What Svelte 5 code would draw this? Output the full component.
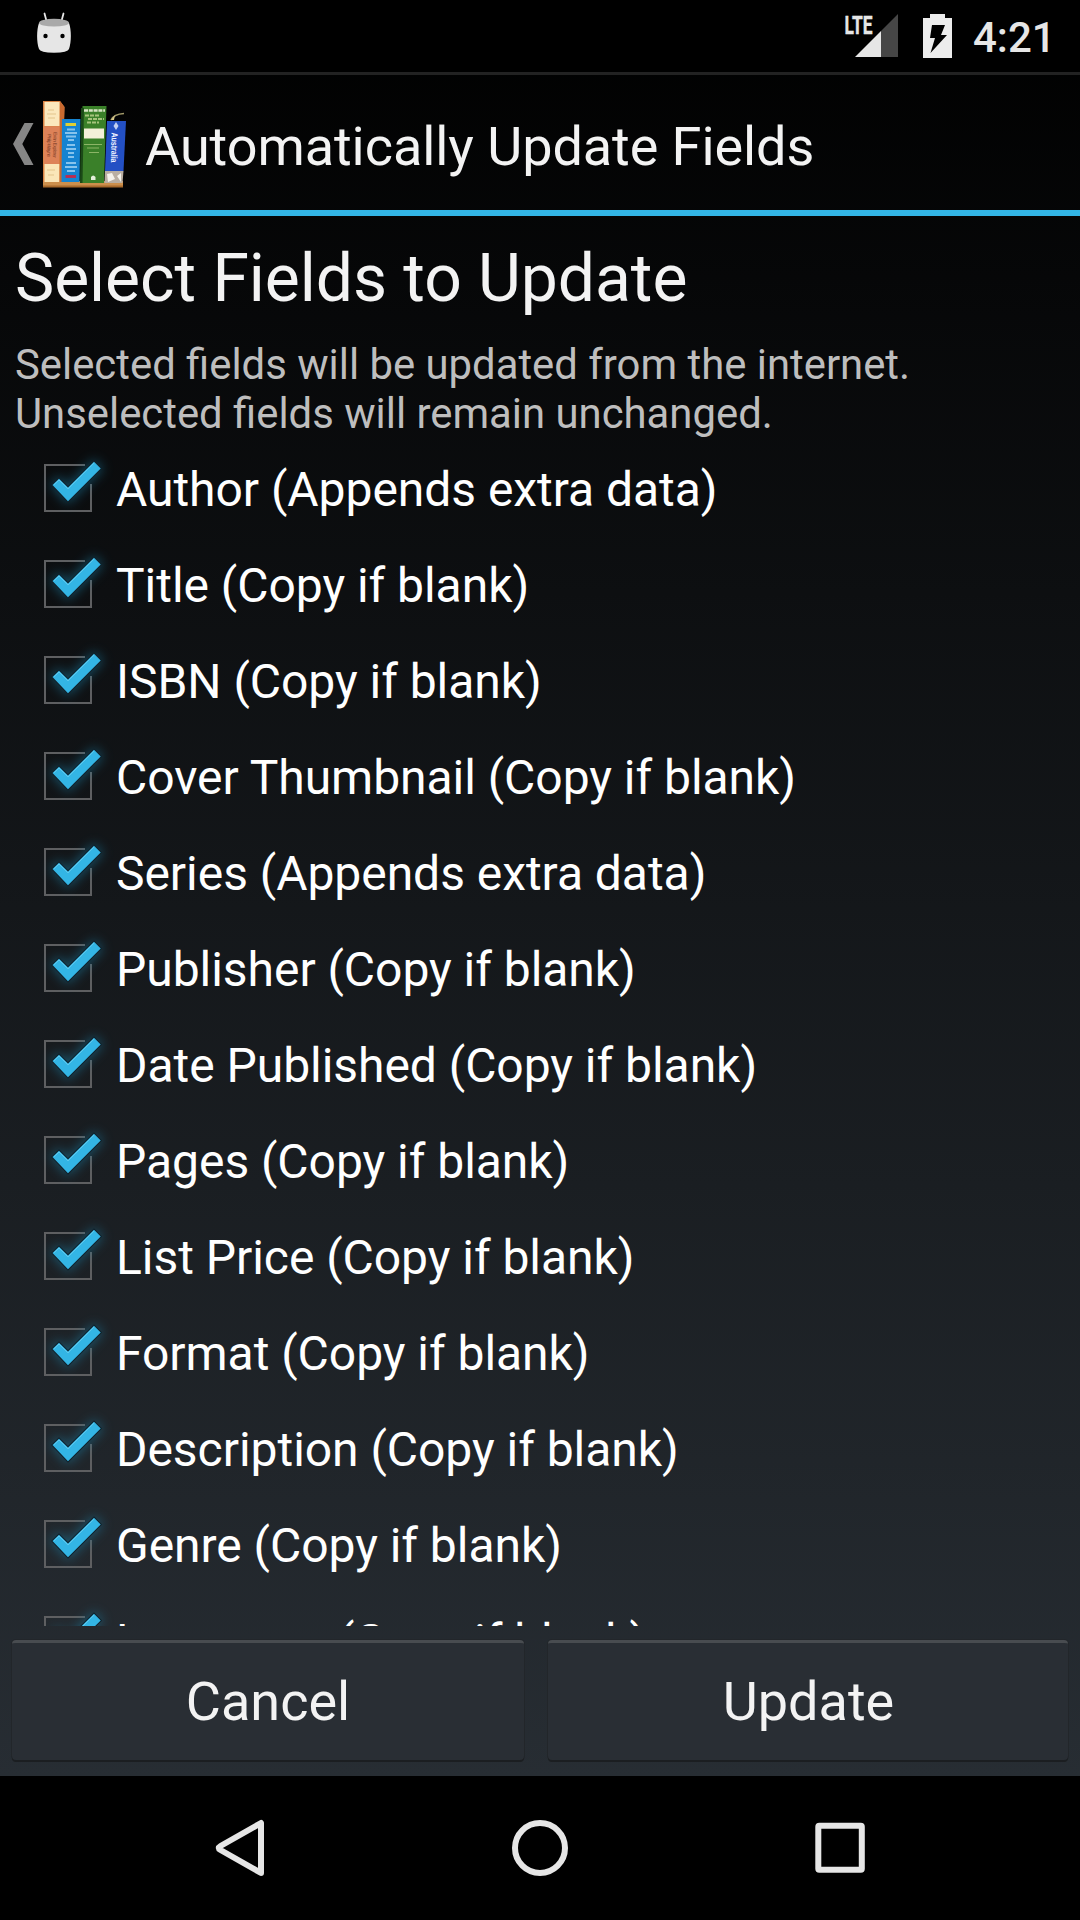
<script>
  const fields = [
    'Author (Appends extra data)',
    'Title (Copy if blank)',
    'ISBN (Copy if blank)',
    'Cover Thumbnail (Copy if blank)',
    'Series (Appends extra data)',
    'Publisher (Copy if blank)',
    'Date Published (Copy if blank)',
    'Pages (Copy if blank)',
    'List Price (Copy if blank)',
    'Format (Copy if blank)',
    'Description (Copy if blank)',
    'Genre (Copy if blank)',
    'Language (Copy if blank)'
  ];
</script>

<div class="screen">
  <header class="status">
    <svg class="droid" width="36" height="42" viewBox="36 12 36 42">
      <path d="M44.500 13.500L46.500 21M63.500 13.500L61.500 21" stroke="#e6e6e6" stroke-width="1.800" stroke-linecap="round" />
      <path d="M39 23C36.500 30 36.500 42 39 49Q40 52.700 54 52.700Q68 52.700 69 49C71.500 42 71.500 30 69 23Z" fill="#e6e6e6" />
      <ellipse cx="54" cy="22.700" rx="15" ry="3.900" fill="#a9a9a9" />
      <circle cx="45.500" cy="36" r="2.200" fill="#000" />
      <circle cx="62.500" cy="36" r="2.200" fill="#000" />
    </svg>
    <svg class="signal" width="56" height="50" viewBox="844 8 56 50">
      <path d="M855 57L881 31V57Z" fill="#e6e6e6" />
      <path d="M881 31L898 14V57H881Z" fill="#464646" />
      <text x="844.500" y="33.800" textLength="28" lengthAdjust="spacingAndGlyphs">LTE</text>
    </svg>
    <svg class="battery" width="30" height="46" viewBox="922 13 30 46">
      <path d="M930 14H945V18H952V58H923V18H930Z" fill="#ececec" />
      <path d="M932 25H945L941 35H947L930.500 53L935 38H930Z" fill="#000" />
    </svg>
    <span class="clock">4:21</span>
  </header>

  <div class="bar">
    <svg class="chevron" width="22" height="44" viewBox="12 122 22 44">
      <path d="M24.500 123H33.500L22.300 144L33.500 165H24.500L13 144Z" fill="#868686" />
    </svg>
    <svg class="logo" width="86" height="90" viewBox="42 99 86 90">
      <path d="M43 181H123V187H43Z" fill="#cc8f4c" />
      <path d="M43 185.500H123V187.500H43Z" fill="#a86a2c" />
      <path d="M43 101H60L64.500 107L62 182H43Z" fill="#d98345" />
      <path d="M44.500 102H59.500V126H44.500Z" fill="#fbe8bd" />
      <path d="M44 126.500H60L59 164H44Z" fill="#dd8258" />
      <path d="M44.500 164H59.500V182H44.500Z" fill="#fae6b8" />
      <path d="M60 101L64.500 107L62 182H59.500Z" fill="#c96a30" />
      <path d="M48 110H54M47 114H56M48 118H55M47 170H55M48 175H54" stroke="#e3c58c" stroke-width="1" />
      <path d="M62 119H80.500L79.500 182H61.500Z" fill="#1583d0" />
      <path d="M65.500 124.500H76" stroke="#e0cf32" stroke-width="3" />
      <path d="M67 129.500H75M65 133H77M66 136.500H76M68 140H74M67 145H75M66 149H76M68 153H74M68 157H74M66 163H76M65 167H77M67 171H75" stroke="#86c3ec" stroke-width="2" />
      <path d="M65.500 176.500H76" stroke="#c02a4d" stroke-width="2.800" />
      <path d="M82.500 106H106.500L104 183H81Z" fill="#3a8029" />
      <path d="M81 108H84L82.500 183H80Z" fill="#1b4a17" />
      <path d="M84 110.500H105" stroke="#d8e4c4" stroke-width="2.500" stroke-dasharray="4 .8" />
      <path d="M85 115.500H99M88 119H104M87 122.500H99" stroke="#a5c47c" stroke-width="1.800" stroke-dasharray="4 1" />
      <path d="M84 128.500H104V138.500H84Z" fill="#f4f0d9" />
      <path d="M84 144.500H102M87 148H99M89 152.500H99" stroke="#8cb566" stroke-width="1.200" />
      <path d="M91 180V177Q93 174 95.500 177V180Z" fill="#e4f0da" />
      <path d="M111 120Q114 114 124 113.500" stroke="#a39a6a" stroke-width="1.600" fill="none" />
      <path d="M111 120L115 115L114 120Z" fill="#d8c98a" />
      <path d="M107 121H126L123.500 171H105Z" fill="#2350c4" />
      <path d="M105 171H123.500L122.500 183H104.500Z" fill="#b9aea2" />
      <path d="M107 174L112 173L115 179L108 182ZM117 176L121 173V182Z" fill="#f4f1ea" />
      <path d="M116 122L118.500 126L116 130L113.500 126Z" fill="#c3d0f2" />
      <text class="spine" transform="translate(111.500 132.500) rotate(91)" textLength="30" lengthAdjust="spacingAndGlyphs">Australia</text>
      <text class="author" transform="translate(53.500 132) rotate(91)" textLength="26">Evan Explorer</text>
      <text class="author" transform="translate(47.500 134) rotate(91)" textLength="23">Philip Wayne</text>
    </svg>
    <span class="title">Automatically Update Fields</span>
  </div>

  <main>
    <h1>Select Fields to Update</h1>
    <p>Selected fields will be updated from the internet.<br />Unselected fields will remain unchanged.</p>
    <div class="list">
      {#each fields as field}
        <div class="row">
          <svg class="check" width="96" height="96" viewBox="0 0 96 96">
            <path d="M61 25H21V71H67V44" fill="none" stroke="#5e5f61" stroke-width="2" />
            <path class="glow" d="M28.700 44.700L34.700 38.700L43.700 48L70 22L76.700 28.700L44 61.300Z" />
            <path class="tick" d="M28.500 45L35 38.700L44 47.500L70 21.700L76.700 28.400L44 61.200Z" />
            <path class="shine" d="M30 44.800L35 40L44 48.900L70 23.100" />
          </svg>
          <span>{field}</span>
        </div>
      {/each}
    </div>
  </main>

  <div class="actions">
    <button class="cancel">Cancel</button>
    <button class="update">Update</button>
  </div>

  <nav>
    <svg width="1080" height="144" viewBox="0 1776 1080 144" fill="none" stroke="#e6e6e6" stroke-width="6" stroke-linejoin="round">
      <path d="M261 1823V1873L220.500 1850Q217 1848 220.500 1846Z" />
      <circle cx="540" cy="1848" r="25" />
      <rect x="818.300" y="1825.800" width="43.500" height="44" rx="1" />
    </svg>
  </nav>
</div>

<style>
  :global(body) { margin: 0; background: #000; }
  .screen {
    width: 1080px; height: 1920px; overflow: hidden; box-sizing: border-box;
    display: flex; flex-direction: column;
    font-family: Roboto, sans-serif; color: #f3f3f3;
    background: linear-gradient(#000 0, #272d33 1776px);
  }
  svg { display: block; flex: none; }
  .status { height: 72px; flex: none; background: #000; display: flex; align-items: flex-start; }
  .droid { margin: 12px 0 0 36px; }
  .signal { margin: 8px 0 0 772px; overflow: visible; }
  .signal text { font: 700 26.500px Roboto, sans-serif; fill: #e6e6e6; stroke: #e6e6e6; stroke-width: .4px; }
  .battery { margin: 13px 0 0 22px; }
  .clock { margin: 13px 0 0 21px; font-size: 42px; line-height: 50px; font-weight: 500; color: #e6e6e6; }
  .bar {
    height: 144px; flex: none; box-sizing: border-box; display: flex; align-items: flex-start;
    border-top: 3px solid #222; border-bottom: 6px solid #33b5e5;
  }
  .chevron { margin: 47px 0 0 12px; }
  .logo { margin: 24px 0 0 8px; }
  .title { margin: 40px 0 0 17px; font-size: 54px; line-height: 64px; letter-spacing: -.06px; white-space: nowrap; }
  .spine { font: 700 9px "Liberation Sans", sans-serif; fill: #eef2ff; }
  .author { font: 5px "Liberation Sans", sans-serif; fill: #7b3c26; }
  main { height: 1410px; flex: none; overflow: hidden; }
  h1 { margin: 24px 0 0 15px; font-size: 66px; line-height: 78px; letter-spacing: -.05px; font-weight: 400; }
  p { margin: 22px 0 0 15px; font-size: 41.840px; line-height: 49px; color: #bebebe; }
  .list { margin-top: 2px; }
  .row { height: 96px; display: flex; align-items: center; padding-left: 24px; font-size: 48px; letter-spacing: -.04px; color: #fff; white-space: nowrap; }
  .row span { margin-left: -4px; padding-top: 3px; }
  .glow { fill: #1b7fa5; stroke: #1b7fa5; stroke-width: 4; filter: blur(6px); opacity: .55; }
  .tick { fill: #33b5e5; stroke: #10212b; stroke-width: 2; paint-order: stroke; }
  .shine { fill: none; stroke: #62cbef; stroke-width: 1; }
  .actions { height: 150px; flex: none; display: flex; box-sizing: border-box; padding: 14px 12px 0; gap: 24px; align-items: flex-start; }
  button {
    height: 120px; padding: 0; border: 0; border-top: 3px solid #484c50; border-radius: 4px;
    background: #292e34; box-shadow: 0 2px 0 #1b1e21, 0 0 0 1px #22262a;
    font: 54px Roboto, sans-serif; color: #f3f3f3;
  }
  .cancel { width: 512px; }
  .update { width: 520px; padding-left: 1px; }
  nav { height: 144px; flex: none; background: #000; }
</style>
